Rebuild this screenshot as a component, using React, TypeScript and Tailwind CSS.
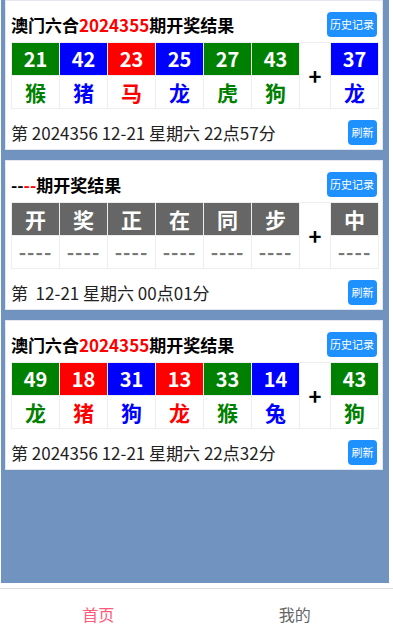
import React from "react";

type Ball = { num: string; zodiac: string; color: "green" | "blue" | "red" };

type Draw = {
  prefix: React.ReactNode;
  balls: Ball[];
  special: Ball;
  footer: string;
};

const bg = {
  green: "bg-[#008000]",
  blue: "bg-[#0000ff]",
  red: "bg-[#ff0000]",
};

const fg = {
  green: "text-[#008000]",
  blue: "text-[#0000ff]",
  red: "text-[#ff0000]",
};

const draws: Draw[] = [
  {
    prefix: (
      <>
        澳门六合<span className="text-[#ff0000]">2024355</span>期开奖结果
      </>
    ),
    balls: [
      { num: "21", zodiac: "猴", color: "green" },
      { num: "42", zodiac: "猪", color: "blue" },
      { num: "23", zodiac: "马", color: "red" },
      { num: "25", zodiac: "龙", color: "blue" },
      { num: "27", zodiac: "虎", color: "green" },
      { num: "43", zodiac: "狗", color: "green" },
    ],
    special: { num: "37", zodiac: "龙", color: "blue" },
    footer: "第 2024356 12-21 星期六 22点57分",
  },
  {
    prefix: (
      <>
        澳门六合<span className="text-[#ff0000]">2024355</span>期开奖结果
      </>
    ),
    balls: [
      { num: "49", zodiac: "龙", color: "green" },
      { num: "18", zodiac: "猪", color: "red" },
      { num: "31", zodiac: "狗", color: "blue" },
      { num: "13", zodiac: "龙", color: "red" },
      { num: "33", zodiac: "猴", color: "green" },
      { num: "14", zodiac: "兔", color: "blue" },
    ],
    special: { num: "43", zodiac: "狗", color: "green" },
    footer: "第 2024356 12-21 星期六 22点32分",
  },
];

function Card({
  title,
  footer,
  children,
}: {
  title: React.ReactNode;
  footer: string;
  children: React.ReactNode;
}) {
  return (
    <div className="flex h-[150px] w-[378px] flex-col border border-[#e4e8ee] bg-white px-[5px] pt-[11px]">
      <div className="flex h-[25px] items-center justify-between">
        <p className="text-[17px] font-bold leading-none text-black">{title}</p>
        <button className="flex h-[25px] w-[50px] items-center justify-center rounded-[4px] bg-[#1e90ff] text-[11px] text-white">
          历史记录
        </button>
      </div>
      <div className="mt-[5px]">{children}</div>
      <div className="mt-[11px] flex h-[25px] items-center justify-between">
        <p className="whitespace-pre text-[17px] leading-none text-[#222]">{footer}</p>
        <button className="flex h-[25px] w-[29px] items-center justify-center rounded-[4px] bg-[#1e90ff] text-[11px] text-white">
          刷新
        </button>
      </div>
    </div>
  );
}

function ResultTable({ draw }: { draw: Draw }) {
  return (
    <table className="w-[367px] table-fixed border-collapse">
      <colgroup>
        {draw.balls.map((_, i) => (
          <col key={i} className="w-[48px]" />
        ))}
        <col className="w-[31px]" />
        <col className="w-[48px]" />
      </colgroup>
      <tbody>
        <tr className="h-[33px]">
          {draw.balls.map((b, i) => (
            <td
              key={i}
              className={`border border-[#eeeeee] text-center text-[20px] font-bold leading-none text-white ${bg[b.color]}`}
            >
              {b.num}
            </td>
          ))}
          <td rowSpan={2} className="border border-[#eeeeee] text-center text-[22px] font-bold text-black">
            +
          </td>
          <td
            className={`border border-[#eeeeee] text-center text-[20px] font-bold leading-none text-white ${bg[draw.special.color]}`}
          >
            {draw.special.num}
          </td>
        </tr>
        <tr className="h-[33px]">
          {draw.balls.map((b, i) => (
            <td
              key={i}
              className={`border border-[#eeeeee] text-center text-[21px] font-bold leading-none ${fg[b.color]}`}
            >
              {b.zodiac}
            </td>
          ))}
          <td
            className={`border border-[#eeeeee] text-center text-[21px] font-bold leading-none ${fg[draw.special.color]}`}
          >
            {draw.special.zodiac}
          </td>
        </tr>
      </tbody>
    </table>
  );
}

function SyncTable() {
  const head = ["开", "奖", "正", "在", "同", "步"];
  return (
    <table className="w-[367px] table-fixed border-collapse">
      <colgroup>
        {head.map((_, i) => (
          <col key={i} className="w-[48px]" />
        ))}
        <col className="w-[31px]" />
        <col className="w-[48px]" />
      </colgroup>
      <tbody>
        <tr className="h-[33px]">
          {head.map((h) => (
            <td
              key={h}
              className="border border-[#eeeeee] bg-[#666666] text-center text-[21px] font-bold leading-none text-white"
            >
              {h}
            </td>
          ))}
          <td rowSpan={2} className="border border-[#eeeeee] text-center text-[22px] font-bold text-black">
            +
          </td>
          <td className="border border-[#eeeeee] bg-[#666666] text-center text-[21px] font-bold leading-none text-white">
            中
          </td>
        </tr>
        <tr className="h-[33px]">
          {[...head, "中"].map((h) => (
            <td
              key={h}
              className="border border-[#eeeeee] text-center text-[20px] font-bold leading-none tracking-[1px] text-[#777777]"
            >
              ----
            </td>
          ))}
        </tr>
      </tbody>
    </table>
  );
}

export default function App() {
  return (
    <div
      className="flex h-[639px] w-[393px] flex-col overflow-hidden bg-white"
      style={{ fontFamily: '"Noto Sans CJK SC", "Noto Sans", sans-serif' }}
    >
      <div className="ml-px flex h-[583px] w-[388px] flex-col gap-[10px] bg-[#7193bf] pl-[4px]">
        <Card title={draws[0].prefix} footer={draws[0].footer}>
          <ResultTable draw={draws[0]} />
        </Card>
        <Card
          title={
            <>
              --<span className="text-[#ff0000]">--</span>期开奖结果
            </>
          }
          footer={"第  12-21 星期六 00点01分"}
        >
          <SyncTable />
        </Card>
        <Card title={draws[1].prefix} footer={draws[1].footer}>
          <ResultTable draw={draws[1]} />
        </Card>
      </div>
      <nav className="mt-[5px] flex flex-1 items-center border-t border-[#dddddd]">
        <a className="flex-1 text-center text-[16px] text-[#ff5a7a]">首页</a>
        <a className="flex-1 text-center text-[16px] text-[#666666]">我的</a>
      </nav>
    </div>
  );
}
